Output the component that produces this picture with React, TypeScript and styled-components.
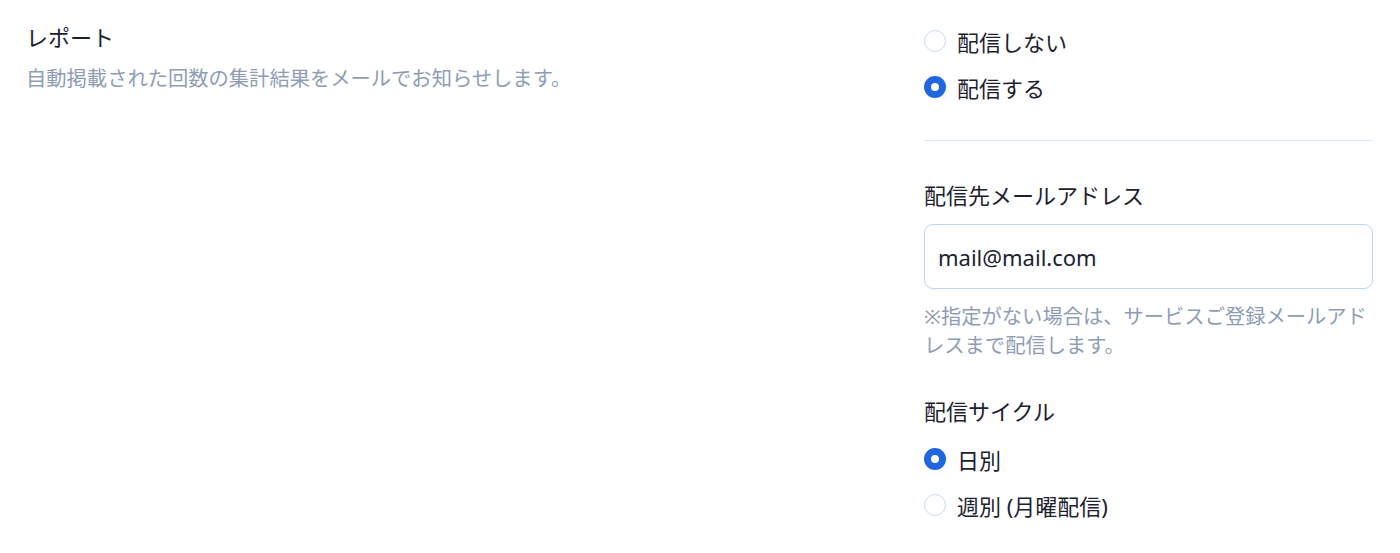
import styled, { createGlobalStyle } from 'styled-components';

const GlobalStyle = createGlobalStyle`
    body {
        margin: 0;
        background: #ffffff;
        font-family: "Noto Sans", "Noto Sans CJK JP", sans-serif;
        color: #1c2130;
    }
`

const Page = styled.div`
    display: flex;
    width: 1400px;
    min-height: 553px;
    box-sizing: border-box;
    padding: 0 27px 0 26px;
`

const Intro = styled.div`
    flex: 1;
    padding-top: 21px;
`

const Settings = styled.div`
    width: 449px;
    padding-top: 18px;
    display: flex;
    flex-direction: column;
`

const Title = styled.div`
    font-size: 22px;
    line-height: 32px;
`

const Note = styled.p<{ $top?: number }>`
    margin: ${p => p.$top ?? 11}px 0 0;
    font-size: 20.3px;
    line-height: 29px;
    color: #8e9db5;
`

const RadioGroup = styled.div<{ $top?: number }>`
    display: flex;
    flex-direction: column;
    margin-top: ${p => p.$top ?? 0}px;
`

const RadioRow = styled.label`
    display: flex;
    align-items: center;
    height: 46px;
    gap: 11px;
    font-size: 22px;
    cursor: pointer;
`

const Dot = styled.span<{ $on?: boolean }>`
    width: 22px;
    height: 22px;
    box-sizing: border-box;
    border-radius: 50%;
    flex-shrink: 0;
    border: ${p => p.$on ? '7px solid #1f66e0' : '1.5px solid #c6ddf8'};
    background: #fff;
`

const Divider = styled.hr`
    border: none;
    border-top: 1px solid #d9e8fa;
    margin: 30px 0 38px;
    width: 100%;
`

const FieldLabel = styled(Title)<{ $top?: number }>`
    margin-top: ${p => p.$top ?? 0}px;
`

const MailInput = styled.input`
    margin-top: 13px;
    height: 65px;
    box-sizing: border-box;
    width: 100%;
    border: 1.5px solid #b9d6f7;
    border-radius: 9px;
    padding: 0 13px;
    font-family: inherit;
    font-size: 22px;
    color: #1c2130;
    outline: none;
`

interface IRadio {
    label: string
    on?: boolean
}

const Radio = ({ label, on }: IRadio) => (
    <RadioRow>
        <Dot $on={on} />
        {label}
    </RadioRow>
)

const App = () => {
    return (
        <Page>
            <GlobalStyle />
            <Intro>
                <Title>レポート</Title>
                <Note>自動掲載された回数の集計結果をメールでお知らせします。</Note>
            </Intro>
            <Settings>
                <RadioGroup>
                    <Radio label="配信しない" />
                    <Radio label="配信する" on />
                </RadioGroup>
                <Divider />
                <FieldLabel>配信先メールアドレス</FieldLabel>
                <MailInput defaultValue="mail@mail.com" />
                <Note $top={13}>※指定がない場合は、サービスご登録メールアドレスまで配信します。</Note>
                <FieldLabel $top={35}>配信サイクル</FieldLabel>
                <RadioGroup $top={9}>
                    <Radio label="日別" on />
                    <Radio label="週別 (月曜配信)" />
                </RadioGroup>
            </Settings>
        </Page>
    )
}

export default App
